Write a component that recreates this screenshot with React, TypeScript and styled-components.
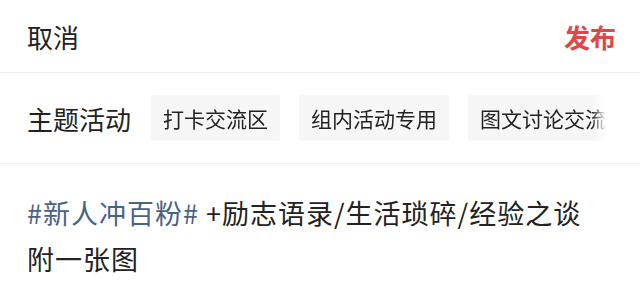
import React from 'react';
import styled, { createGlobalStyle } from 'styled-components';

const GlobalStyle = createGlobalStyle`
  html, body {
    margin: 0;
    padding: 0;
    background: #ffffff;
  }
  body {
    font-family: "Noto Sans CJK SC", "Noto Sans", sans-serif;
    color: #222222;
  }
`;

const topics = ['打卡交流区', '组内活动专用', '图文讨论交流'];

const App: React.FC = () => {
  return (
    <>
      <GlobalStyle />
      <Page>
        <Header>
          <CancelButton>取消</CancelButton>
          <PublishButton>发布</PublishButton>
        </Header>
        <TopicRow>
          <TopicLabel>主题活动</TopicLabel>
          <ChipScroller>
            {topics.map((topic) => (
              <Chip key={topic}>{topic}</Chip>
            ))}
          </ChipScroller>
        </TopicRow>
        <Body>
          <HashTag>#新人冲百粉#</HashTag> +励志语录/生活琐碎/经验之谈
          <br />
          附一张图
        </Body>
      </Page>
    </>
  );
};

const Page = styled.div`
  width: 640px;
  height: 304px;
  overflow: hidden;
  background: #ffffff;
`;

const Header = styled.div`
  display: flex;
  align-items: center;
  justify-content: space-between;
  height: 73px;
  padding: 0 24px 0 27px;
  border-bottom: 1px solid #f0f0f0;
  box-sizing: border-box;
`;

const CancelButton = styled.span`
  font-size: 26px;
  color: #222222;
`;

const PublishButton = styled.span`
  font-size: 26px;
  font-weight: 700;
  color: #e04848;
`;

const TopicRow = styled.div`
  display: flex;
  align-items: center;
  height: 91px;
  padding-left: 27px;
  padding-right: 34px;
  border-bottom: 1px solid #f0f0f0;
  box-sizing: border-box;
`;

const TopicLabel = styled.span`
  flex-shrink: 0;
  font-size: 26px;
  color: #222222;
  margin-right: 20px;
`;

const ChipScroller = styled.div`
  display: flex;
  gap: 19px;
  flex: 1;
  min-width: 0;
  overflow: hidden;
  -webkit-mask-image: linear-gradient(to right, #000 calc(100% - 14px), transparent);
  mask-image: linear-gradient(to right, #000 calc(100% - 14px), transparent);
`;

const Chip = styled.span`
  flex-shrink: 0;
  display: flex;
  align-items: center;
  height: 46px;
  padding: 0 12px;
  border-radius: 3px;
  background: #f6f6f6;
  font-size: 21px;
  color: #222222;
  white-space: nowrap;
`;

const Body = styled.div`
  padding: 26px 27px 0 27px;
  font-size: 27px;
  line-height: 46px;
  letter-spacing: 1px;
  color: #222222;
`;

const HashTag = styled.span`
  color: #4a6285;
`;

export default App;
